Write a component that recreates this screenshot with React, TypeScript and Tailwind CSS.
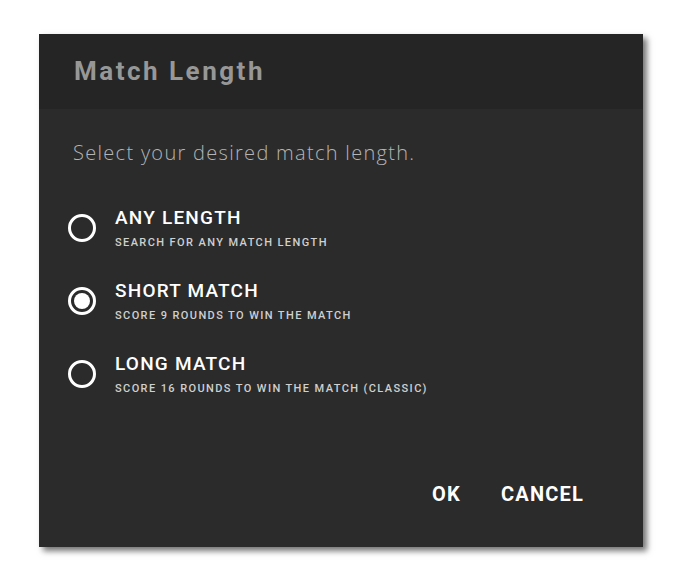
const options = [
  { title: "ANY LENGTH", sub: "SEARCH FOR ANY MATCH LENGTH" },
  { title: "SHORT MATCH", sub: "SCORE 9 ROUNDS TO WIN THE MATCH" },
  { title: "LONG MATCH", sub: "SCORE 16 ROUNDS TO WIN THE MATCH (CLASSIC)" },
];

function Radio({ checked }: { checked: boolean }) {
  return (
    <div className="w-[28px] h-[28px] rounded-full border-[3px] border-white flex items-center justify-center shrink-0">
      {checked && <div className="w-[16px] h-[16px] rounded-full bg-white" />}
    </div>
  );
}

export default function App() {
  const selected = 1;
  return (
    <div className="w-[683px] h-[580px] bg-white pl-[39px] pt-[34px]">
      <div
        className="w-[604px] h-[513px] bg-[#2b2b2b] flex flex-col shadow-[4px_4px_6px_rgba(0,0,0,0.55)]"
        style={{ fontFamily: "Roboto, 'Noto Sans', sans-serif" }}
      >
        <div className="h-[75px] bg-[#252525] px-[35px] flex items-center">
          <h1 className="text-[26px] font-bold text-[#979797] tracking-[2.5px]">Match Length</h1>
        </div>
        <div className="flex-1 flex flex-col px-[29px]">
          <p
            className="mt-[31px] pl-[5px] text-[20px] font-light text-[#b4b4b4] leading-[26px] tracking-[1.3px]"
            style={{ fontFamily: "'Open Sans', sans-serif" }}
          >
            Select your desired match length.
          </p>
          <div className="mt-[39px] flex flex-col gap-[27px]">
            {options.map((o, i) => (
              <div key={o.title} className="flex items-center gap-[19px]">
                <Radio checked={i === selected} />
                <div className="flex flex-col">
                  <span className="text-[19px] font-medium text-white leading-[26px] tracking-[1.2px]">
                    {o.title}
                  </span>
                  <span className="mt-[4px] text-[11px] font-medium text-[#d0d0d0] leading-[16px] tracking-[1.4px]">
                    {o.sub}
                  </span>
                </div>
              </div>
            ))}
          </div>
          <div className="mt-auto mb-[40px] flex justify-end gap-[40px] pr-[30px]">
            <button className="text-[20px] font-bold text-white tracking-[1.2px] leading-[26px]">OK</button>
            <button className="text-[20px] font-bold text-white tracking-[1.2px] leading-[26px]">CANCEL</button>
          </div>
        </div>
      </div>
    </div>
  );
}
